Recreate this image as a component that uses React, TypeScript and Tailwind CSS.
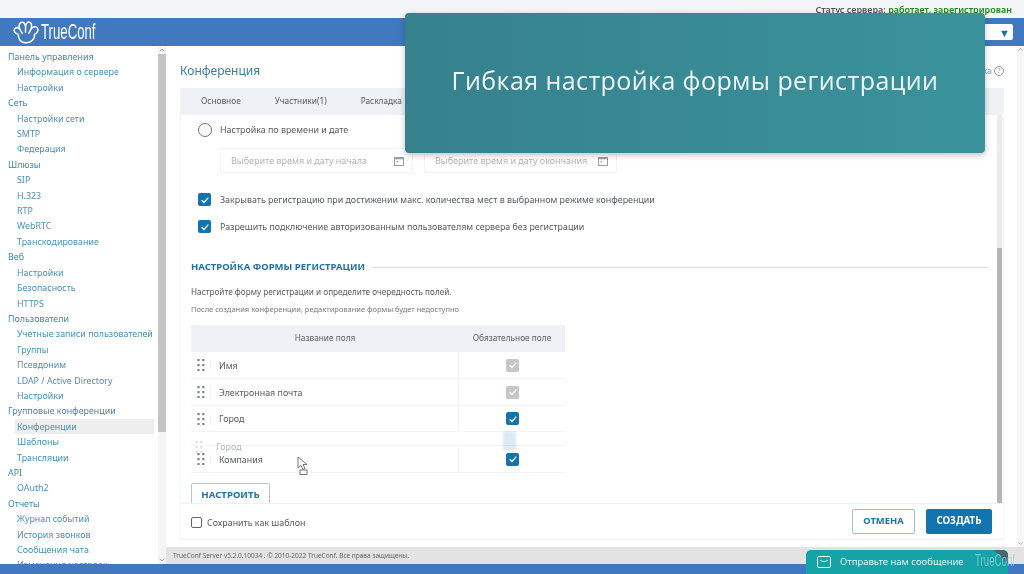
import { ChevronUp, ChevronDown } from "lucide-react";

const MENU: { title: string; items: string[] }[] = [
  { title: "Панель управления", items: ["Информация о сервере", "Настройки"] },
  { title: "Сеть", items: ["Настройки сети", "SMTP", "Федерация"] },
  { title: "Шлюзы", items: ["SIP", "H.323", "RTP", "WebRTC", "Транскодирование"] },
  { title: "Веб", items: ["Настройки", "Безопасность", "HTTPS"] },
  { title: "Пользователи", items: ["Учетные записи пользователей", "Группы", "Псевдоним", "LDAP / Active Directory", "Настройки"] },
  { title: "Групповые конференции", items: ["Конференции", "Шаблоны", "Трансляции"] },
  { title: "API", items: ["OAuth2"] },
  { title: "Отчеты", items: ["Журнал событий", "История звонков", "Сообщения чата", "Изменения настроек"] },
];

const FIELDS = [
  { name: "Имя", locked: true, height: "h-[27px]" },
  { name: "Электронная почта", locked: true, height: "h-[27px]" },
  { name: "Город", locked: false, height: "h-[26px]" },
];

function Check({ locked = false }: { locked?: boolean }) {
  return (
    <span className={`flex h-[13px] w-[13px] shrink-0 items-center justify-center rounded-[2px] ${locked ? "bg-[#c4c6c8]" : "bg-[#1274ae]"}`}>
      <svg viewBox="0 0 12 12" className="h-[10px] w-[10px]" fill="none" stroke="white" strokeWidth="1.6">
        <path d="M2 6.4 4.8 9 10 3.2" />
      </svg>
    </span>
  );
}

function Grip({ faded = false }: { faded?: boolean }) {
  return (
    <svg viewBox="0 0 8 12" className={`h-[12px] w-[8px] ${faded ? "opacity-25" : ""}`} fill="#7d8388">
      {[1, 6, 11].map((y) => (
        <g key={y}>
          <rect x="0.4" y={y - 1} width="2.2" height="2.2" />
          <rect x="5.2" y={y - 1} width="2.2" height="2.2" />
        </g>
      ))}
    </svg>
  );
}

function DateInput({ label }: { label: string }) {
  return (
    <div className="flex h-[25px] w-[193px] items-center justify-between rounded-[2px] border border-[#f1f3f5] pl-[10px] pr-[8px] text-[9px] text-[#b0b4b8]">
      <span className="whitespace-nowrap">{label}</span>
      <svg viewBox="0 0 10 10" className="h-[10px] w-[10px]" fill="none" stroke="#9a9ea2" strokeWidth="1">
        <rect x="0.5" y="1.5" width="9" height="8" />
        <path d="M0.5 2.5h9" strokeWidth="1.6" />
        <rect x="2.5" y="5" width="1.5" height="1.5" fill="#9a9ea2" stroke="none" />
      </svg>
    </div>
  );
}

function Row({ name, locked, height = "h-[27px]" }: { name: string; locked: boolean; height?: string }) {
  return (
    <div className={`flex ${height} border-b border-[#f2f4f6] text-[8.9px] text-[#555b60]`}>
      <div className="flex w-[268px] items-center border-r border-[#f2f4f6]">
        <span className="flex w-[20px] justify-center border-r border-[#f2f4f6]">
          <Grip />
        </span>
        <span className="pl-[8px]">{name}</span>
      </div>
      <div className="flex flex-1 items-center justify-center pl-[1px]">
        <Check locked={locked} />
      </div>
    </div>
  );
}

export default function App() {
  return (
    <div className="relative flex h-[574px] w-[1024px] flex-col overflow-hidden bg-white font-['Noto_Sans',sans-serif] blur-[0.35px]">
      <div className="flex h-[18px] shrink-0 items-center justify-end bg-[#f3f5f8] pr-[12px] pt-[2px] text-[9px] font-semibold text-[#555]">
        Статус сервера:&nbsp;<span className="text-[#1f8a1f]">работает, зарегистрирован</span>
      </div>

      <header className="flex h-[28px] shrink-0 items-center justify-between bg-[#4079bf] pl-[12px] pr-[11px]">
        <div className="flex items-center gap-[1px] text-white">
          <svg viewBox="0 0 30 26" className="h-[25px] w-[28px]" fill="none" stroke="white" strokeWidth="1.6" strokeLinejoin="round" strokeLinecap="round">
            <path d="M7 15C3 14 1 11 3 9c2-2 4-1 5 0-1-4 0-7 3-7 2 0 3 2 3.500 4 .5-3 2.500-5 4.500-4 3 1 2 5 1.500 7 1.500-2 4.500-3 6.500-1s0 6-3 7c1 4-3 9-9 9s-9-5-8-9Z" />
            <path d="M8 9c1 2 2 3 3 5M14.500 6v7M20.500 9c-1 2-1.500 3-2.500 5" />
          </svg>
          <span className="origin-left scale-x-[0.6] text-[22px] leading-none text-white font-['Liberation_Sans',sans-serif]">TrueConf</span>
        </div>
        <div className="flex h-[16px] w-[40px] items-center justify-end rounded-[2px] bg-white pr-[3px]">
          <span className="text-[11px] leading-none text-[#1274ae]">▼</span>
        </div>
      </header>

      <div className="flex min-h-0 flex-1">
        <nav className="h-full w-[158px] shrink-0 overflow-hidden pt-[3px] text-[8.9px] leading-[15.4px]">
          {MENU.map((group) => (
            <div key={group.title}>
              <div className="pl-[8px] text-[#3f87b0]">{group.title}</div>
              {group.items.map((item) => (
                <div
                  key={group.title + item}
                  className={`ml-[15px] mr-[4px] whitespace-nowrap pl-[2px] text-[#4b90b8] ${item === "Конференции" ? "bg-[#eeeeee]" : ""}`}
                >
                  {item}
                </div>
              ))}
            </div>
          ))}
        </nav>

        <div className="flex h-full w-[8px] shrink-0 flex-col bg-[#f5f5f5]">
          <ChevronUp className="h-[8px] w-[8px] text-[#888]" />
          <div className="h-[378px] bg-[#c4c4c4]" />
          <div className="flex-1" />
          <ChevronDown className="h-[8px] w-[8px] text-[#888]" />
        </div>

        <main className="flex min-w-0 flex-1 flex-col">
          <div className="flex min-h-0 flex-1">
            <div className="flex min-w-0 flex-1 flex-col pl-[14px] pr-[13px]">
              <div className="flex h-[42px] shrink-0 items-center justify-between pt-[8px]">
                <h1 className="text-[12px] font-normal text-[#3d7d9f]">Конференция</h1>
                <div className="flex items-center gap-[2px] text-[9px] text-[#7ca9c4]">
                  <span>Справка</span>
                  <span className="flex h-[10px] w-[10px] items-center justify-center rounded-full border border-[#999] text-[7px] text-[#999]">?</span>
                </div>
              </div>

              <div className="mb-[7px] flex min-h-0 flex-1 flex-col border-x border-b border-[#f3f5f7]">
                <div className="flex h-[27px] shrink-0 items-center gap-[34px] bg-[#eef2f6] pl-[20px] text-[8.3px] text-[#555b60]">
                  <span>Основное</span>
                  <span>Участники(1)</span>
                  <span>Раскладка</span>
                </div>

                <div className="flex min-h-0 flex-1">
                  <div className="min-w-0 flex-1 overflow-hidden pl-[10px]">
                    <div className="flex h-[29px] items-center gap-[8px] pl-[7px] text-[8.9px] text-[#555b60]">
                      <span className="h-[14px] w-[14px] rounded-full border-[1.5px] border-[#777]" />
                      Настройка по времени и дате
                    </div>
                    <div className="flex gap-[11px] pl-[29px] pt-[4px]">
                      <DateInput label="Выберите время и дату начала" />
                      <DateInput label="Выберите время и дату окончания" />
                    </div>
                    <div className="box-content flex h-[27px] items-center gap-[9px] pl-[7px] pt-[13px] text-[8.9px] text-[#555b60]">
                      <Check />
                      Закрывать регистрацию при достижении макс. количества мест в выбранном режиме конференции
                    </div>
                    <div className="flex h-[27px] items-center gap-[9px] pl-[7px] text-[8.9px] text-[#555b60]">
                      <Check />
                      Разрешить подключение авторизованным пользователям сервера без регистрации
                    </div>

                    <div className="flex items-center gap-[6px] pr-[8px] pt-[20px]">
                      <span className="whitespace-nowrap text-[9.5px] font-bold text-[#2473a0]">НАСТРОЙКА ФОРМЫ РЕГИСТРАЦИИ</span>
                      <span className="h-px flex-1 bg-[#d8dfe4]" />
                    </div>
                    <p className="pt-[12px] text-[8.2px] leading-[12px] text-[#555b60]">Настройте форму регистрации и определите очередность полей.</p>
                    <p className="pt-[6px] text-[7.5px] leading-[10px] text-[#777c80]">После создания конференции, редактирование формы будет недоступно</p>

                    <div className="mt-[11px] w-[374px]">
                      <div className="flex h-[27px] items-center bg-[#eef2f6] pb-[2px] text-[8.3px] text-[#5c6266]">
                        <span className="w-[268px] text-center">Название поля</span>
                        <span className="flex-1 text-center">Обязательное поле</span>
                      </div>
                      {FIELDS.map((f) => (
                        <Row key={f.name} name={f.name} locked={f.locked} height={f.height} />
                      ))}
                      <div className="h-[13px]" />
                      <div className="border-t border-[#f2f4f6]">
                        <Row name="Компания" locked={false} />
                      </div>
                    </div>

                    <div className="mt-[10px] flex h-[22px] w-[79px] items-center justify-center rounded-t-[2px] border border-b-0 border-[#b9c6cf] text-[9.6px] font-bold text-[#2473a0]">
                      НАСТРОИТЬ
                    </div>
                  </div>
                  <div className="mr-[1px] flex w-[5px] shrink-0 flex-col bg-[#ececec]">
                    <div className="h-[133px]" />
                    <div className="flex-1 bg-[#b5b5b5]" />
                  </div>
                </div>

                <div className="flex h-[36px] shrink-0 items-center justify-between border-t border-[#eef0f2] pl-[10px] pr-[11px]">
                  <div className="flex items-center gap-[5px] pt-[2px] text-[8.9px] text-[#555b60]">
                    <span className="h-[11px] w-[11px] rounded-[2px] border-[1.5px] border-[#666]" />
                    Сохранить как шаблон
                  </div>
                  <div className="flex gap-[11px] font-bold">
                    <span className="flex h-[25px] w-[63px] items-center justify-center rounded-[2px] border border-[#9fc0d6] text-[9.4px] text-[#2473a0]">ОТМЕНА</span>
                    <span className="flex h-[25px] w-[66px] items-center justify-center rounded-[2px] bg-[#1274ae] text-[9.8px] text-white">СОЗДАТЬ</span>
                  </div>
                </div>
              </div>
            </div>
            <div className="flex h-full w-[7px] shrink-0 flex-col justify-between bg-[#f7f7f7] text-[#888]">
              <ChevronUp className="h-[7px] w-[7px]" />
              <ChevronDown className="h-[7px] w-[7px]" />
            </div>
          </div>
          <footer className="flex h-[17px] shrink-0 items-center bg-[#e3e3e3] pl-[7px] text-[6.5px] text-[#666]">
            TrueConf Server v5.2.0.10034 . © 2010-2022 TrueConf. Все права защищены.
          </footer>
        </main>
      </div>

      <div className="h-[10px] shrink-0 bg-[#4079bf]" />

      {/* плашка поверх интерфейса */}
      <div className="absolute left-[405px] top-[13px] flex h-[140px] w-[580px] items-center justify-center rounded-[4px] bg-gradient-to-r from-[#36818d] to-[#3a939c] pb-[4px] shadow-[0_2px_6px_rgba(0,0,0,0.25)]">
        <span className="font-['Open_Sans',sans-serif] text-[25px] tracking-[0.42px] text-[#eef6f7]">Гибкая настройка формы регистрации</span>
      </div>

      {/* перетаскиваемая строка */}
      <div className="absolute left-[195px] top-[441px] flex h-[12px] w-[330px] items-center gap-[13px] text-[9px] text-[#b5b8ba]">
        <Grip faded />
        <span>Город</span>
      </div>
      <div className="absolute left-[503px] top-[431px] h-[20px] w-[13px] rounded-[2px] bg-[#1274ae]/15 blur-[1px]" />

      {/* курсор */}
      <svg viewBox="0 0 12 19" className="absolute left-[297px] top-[456px] h-[19px] w-[12px]" fill="white" stroke="#555" strokeWidth="0.8">
        <path d="M1 1v11l3-2.500 2 4 2-1-2-4h4Z" />
        <rect x="3" y="14" width="7" height="4.500" />
      </svg>

      {/* чат */}
      <div className="absolute bottom-0 left-[806px] flex h-[24px] w-[202px] items-center overflow-hidden rounded-t-[5px] bg-[#14a3a7] pl-[11px] text-[9.5px] text-[#e6f6f6]">
        <svg viewBox="0 0 14 12" className="mr-[9px] h-[12px] w-[14px]" fill="none" stroke="white" strokeWidth="1">
          <rect x="0.5" y="0.5" width="13" height="11" rx="1.5" />
          <path d="M3 4c2 2 6 2 8 0" />
        </svg>
        Отправьте нам сообщение
        <span className="absolute right-0 top-0 h-[14px] w-[14px] bg-[#4a6670] [clip-path:polygon(0_0,100%_100%,100%_0)]" />
      </div>
      <span className="absolute left-[975px] top-[552px] origin-left scale-x-[0.57] font-['Liberation_Sans',sans-serif] text-[17px] leading-none text-[#9fd4e0]/70">TrueConf</span>
    </div>
  );
}
